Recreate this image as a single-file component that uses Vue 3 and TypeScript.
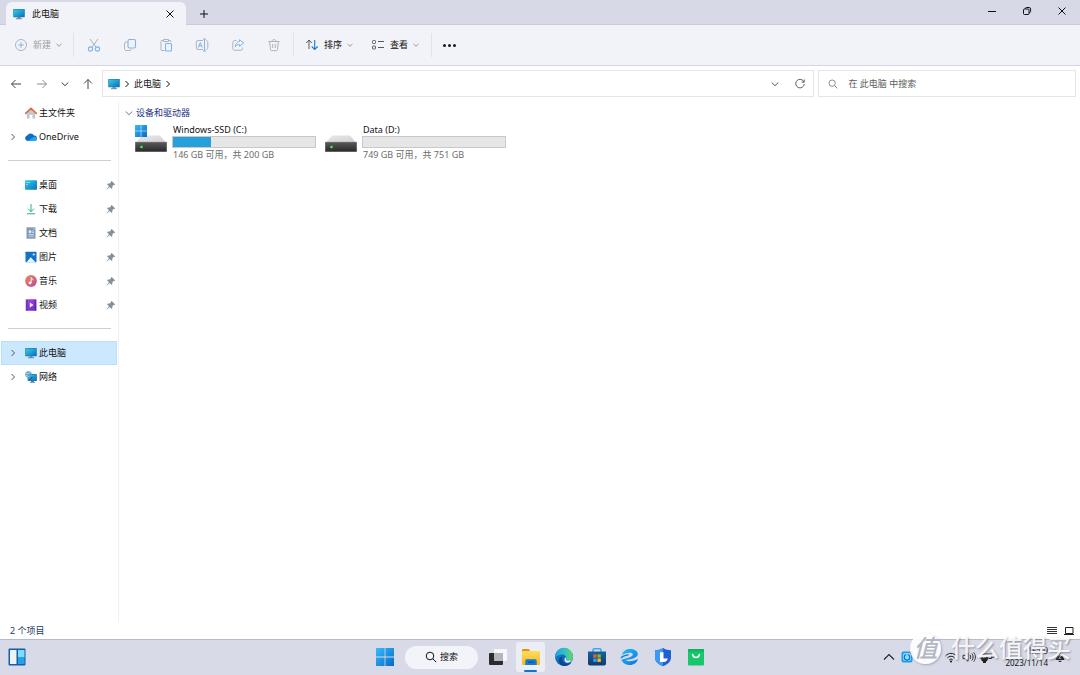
<script setup lang="ts">
interface NavItem {
  label: string
  icon: string
  expandable?: boolean
  pinned?: boolean
  active?: boolean
}
interface Drive {
  name: string
  free: number
  total: number
  system: boolean
  used: number
}

const editTools = [
  { icon: 'cut', label: '剪切' },
  { icon: 'copy', label: '复制' },
  { icon: 'paste', label: '粘贴' },
  { icon: 'rename', label: '重命名' },
  { icon: 'share', label: '共享' },
  { icon: 'trash', label: '删除' },
]

const navGroups: NavItem[][] = [
  [
    { label: '主文件夹', icon: 'home' },
    { label: 'OneDrive', icon: 'cloud', expandable: true },
  ],
  [
    { label: '桌面', icon: 'desktop', pinned: true },
    { label: '下载', icon: 'download', pinned: true },
    { label: '文档', icon: 'document', pinned: true },
    { label: '图片', icon: 'picture', pinned: true },
    { label: '音乐', icon: 'music', pinned: true },
    { label: '视频', icon: 'video', pinned: true },
  ],
  [
    { label: '此电脑', icon: 'pc', expandable: true, active: true },
    { label: '网络', icon: 'network', expandable: true },
  ],
]

const drives: Drive[] = [
  { name: 'Windows-SSD (C:)', free: 146, total: 200, system: true, used: 27 },
  { name: 'Data (D:)', free: 749, total: 751, system: false, used: 0 },
]

const apps = [
  { icon: 'taskview', label: '任务视图' },
  { icon: 'explorer', label: '文件资源管理器', active: true },
  { icon: 'edge', label: 'Edge' },
  { icon: 'store', label: 'Store' },
  { icon: 'browser', label: '浏览器' },
  { icon: 'shield', label: '电脑管家' },
  { icon: 'shop', label: '应用商店' },
]
</script>

<template>
  <div class="screen">
    <svg class="sprites" width="0" height="0" aria-hidden="true">
      <defs>
        <linearGradient id="gScreen" x1="0" y1="0" x2="1" y2="1">
          <stop offset="0" stop-color="#32cfe0" /><stop offset="1" stop-color="#0a70c4" />
        </linearGradient>
        <linearGradient id="gWin" x1="0" y1="0" x2="1" y2="1">
          <stop offset="0" stop-color="#35bdf5" /><stop offset="1" stop-color="#0868cc" />
        </linearGradient>
        <linearGradient id="gDisk" x1="0" y1="0" x2="0" y2="1">
          <stop offset="0" stop-color="#5a5a5c" /><stop offset="1" stop-color="#29292b" />
        </linearGradient>
        <linearGradient id="gLid" x1="0" y1="0" x2="1" y2="1">
          <stop offset="0" stop-color="#e9e9ea" /><stop offset="1" stop-color="#d0d0d3" />
        </linearGradient>
        <linearGradient id="gMusic" x1="0" y1="0" x2="1" y2="1">
          <stop offset="0" stop-color="#f08a56" /><stop offset="1" stop-color="#b8489c" />
        </linearGradient>
        <linearGradient id="gVideo" x1="0" y1="0" x2="1" y2="1">
          <stop offset="0" stop-color="#a24be6" /><stop offset="1" stop-color="#6c2bc0" />
        </linearGradient>
        <linearGradient id="gFolder" x1="0" y1="0" x2="0" y2="1">
          <stop offset="0" stop-color="#ffdc5e" /><stop offset="1" stop-color="#f7b71d" />
        </linearGradient>
        <linearGradient id="gEdge" x1="0" y1="0" x2="1" y2="0">
          <stop offset="0" stop-color="#1f9fe0" /><stop offset=".55" stop-color="#35bfc5" /><stop offset="1" stop-color="#66d85a" />
        </linearGradient>
        <linearGradient id="gEdgeLow" x1="0" y1="0" x2="1" y2="1">
          <stop offset="0" stop-color="#1787d8" /><stop offset="1" stop-color="#0c4e9c" />
        </linearGradient>
        <linearGradient id="gStore" x1="0" y1="0" x2="0" y2="1">
          <stop offset="0" stop-color="#17619f" /><stop offset="1" stop-color="#123a6c" />
        </linearGradient>
        <linearGradient id="gBrowser" x1="0" y1="0" x2="1" y2="1">
          <stop offset="0" stop-color="#1ec4f4" /><stop offset="1" stop-color="#0e70e4" />
        </linearGradient>
      </defs>

      <symbol id="pc" viewBox="0 0 12 12">
        <path d="M4.500 9h3v1.600h-3z" fill="#7d97aa" /><path d="M3 10.300h6v.9H3z" fill="#5b7b92" />
        <rect x=".3" y="1" width="11.400" height="8.300" rx=".5" fill="#1c6fa0" />
        <rect x=".8" y="1.500" width="10.400" height="7.200" fill="url(#gScreen)" />
      </symbol>
      <symbol id="network" viewBox="0 0 12 12">
        <path d="M6 9.800h3V11h1v.8H5V11h1z" fill="#5b7b92" />
        <rect x="2.600" y="3" width="9.200" height="7" rx=".4" fill="#1c6fa0" />
        <rect x="3.100" y="3.500" width="8.200" height="6" fill="url(#gScreen)" />
        <circle cx="3.500" cy="3.500" r="3.200" fill="#4f9fcb" />
        <path d="M1 2.500c1.500-.8 2 .4 3 0S5 1 5.500 1.200M1 5c1-.6 2-.2 2.500 1" stroke="#d4eef8" stroke-width=".9" fill="none" />
        <path d="m4.500 9 3-3.200" stroke="#135f9a" stroke-width="1.200" />
      </symbol>
      <symbol id="home" viewBox="0 0 12 12">
        <path d="M1.800 5.500 6 1.800l4.200 3.700v6H7.400V7.800H4.600v3.700H1.800z" fill="#c2c7cd" />
        <path d="M.7 6.400 6 1.300l5.300 5.100" fill="none" stroke="#e0653a" stroke-width="1.500" stroke-linecap="round" stroke-linejoin="round" />
      </symbol>
      <symbol id="cloud" viewBox="0 0 12 12">
        <path d="M2.800 10A2.800 2.800 0 0 1 2.200 4.500 3.900 3.900 0 0 1 9 4.600a2.700 2.700 0 0 1 .5 5.400z" fill="#0f6cc9" />
        <path d="M2.800 10 8.600 6a2.600 2.600 0 0 1 3.300 1.900A2.100 2.100 0 0 1 9.700 10z" fill="#28a4ee" />
      </symbol>
      <symbol id="desktop" viewBox="0 0 12 12">
        <rect x="0" y="1.300" width="12" height="9.400" rx=".8" fill="url(#gScreen)" />
        <path d="M1.500 3h1v1h-1zM1.500 5h1v1h-1zM3.500 3h1v1h-1z" fill="#c7f4f7" />
      </symbol>
      <symbol id="download" viewBox="0 0 12 12">
        <path d="M6 1v7.500M3 5.700l3 3 3-3M2 10.800h8" stroke="#2fae8c" fill="none" stroke-width="1" />
      </symbol>
      <symbol id="document" viewBox="0 0 12 12">
        <path d="M1.500.3h9v11.400h-9z" fill="#8299b8" /><path d="M8.500.3v2h2z" fill="#c8d6e5" />
        <path d="M4 3.700h2v2H4zM7 4h2M7 5.500h2M3.500 7.500H9M3.500 9.200H9" fill="#eef4fa" stroke="#dfe9f3" stroke-width=".7" />
      </symbol>
      <symbol id="picture" viewBox="0 0 12 12">
        <rect x=".5" y=".7" width="11" height="10.600" rx=".6" fill="#1272c8" />
        <path d="m1.500 11.300 4.200-5 4.800 5z" fill="#e6f4ff" /><circle cx="8.700" cy="3.500" r="1.100" fill="#d8eeff" />
      </symbol>
      <symbol id="music" viewBox="0 0 12 12">
        <circle cx="6" cy="6" r="5.900" fill="url(#gMusic)" />
        <path d="M6.200 7.800V2.700c.3 1.100 2 1.200 2 2.500" stroke="#fff" stroke-width=".9" fill="none" /><circle cx="5" cy="7.900" r="1.400" fill="#fff" />
      </symbol>
      <symbol id="video" viewBox="0 0 12 12">
        <rect x=".7" y=".2" width="10.800" height="11.600" rx=".6" fill="url(#gVideo)" />
        <path d="M2 1.200v10M10.200 1.200v10" stroke="#3f1680" stroke-width="1.100" stroke-dasharray="1.200 1" /><path d="m4.800 3.500 3.800 2.500-3.800 2.500z" fill="#f3eaff" />
      </symbol>
      <symbol id="pin" viewBox="0 0 10 10">
        <path d="m5.500.8 3.700 3.700-.8.4-.6-.1-1.500 1.500.1 1.800-.8.800L3.700 7 1 9.500.6 9.200 3 6.300 1 4.300l.9-.8 1.800.1 1.500-1.500-.1-.7z" fill="#84909b" />
      </symbol>

      <symbol id="chevron-right" viewBox="0 0 8 8"><path d="m2.500 1 3 3-3 3" fill="none" stroke="currentColor" stroke-width="1" /></symbol>
      <symbol id="chevron-down" viewBox="0 0 8 8"><path d="m.7 2.500 3.300 3.200 3.300-3.200" fill="none" stroke="currentColor" stroke-width="1" /></symbol>

      <symbol id="cut" viewBox="0 0 14 14" fill="none">
        <path d="M3 1 9.200 9.500M11 1 4.800 9.500" stroke="#a5a8af" stroke-width=".9" />
        <circle cx="3.500" cy="11" r="2.100" stroke="#7fb5e6" stroke-width="1.100" /><circle cx="10.500" cy="11" r="2.100" stroke="#7fb5e6" stroke-width="1.100" />
      </symbol>
      <symbol id="copy" viewBox="0 0 14 14" fill="none">
        <path d="M4.500 4H3a1.500 1.500 0 0 0-1.500 1.500v5.300c0 1 .7 1.700 1.700 1.700h3.600c1 0 1.500-.6 1.700-1.500" stroke="#a8abb2" stroke-width=".9" />
        <rect x="5" y="1.500" width="7.500" height="8.500" rx="1.500" stroke="#7fb5e6" stroke-width="1.100" />
      </symbol>
      <symbol id="paste" viewBox="0 0 14 14" fill="none">
        <path d="M5.500 12.500H3a1 1 0 0 1-1-1v-8a1 1 0 0 1 1-1h1.500m5 0H11a1 1 0 0 1 1 1v.5M4.500 1.500h5v2h-5z" stroke="#a8abb2" stroke-width=".9" />
        <rect x="6.500" y="5.500" width="6" height="7.500" rx="1" stroke="#7fb5e6" stroke-width="1.100" />
      </symbol>
      <symbol id="rename" viewBox="0 0 14 14" fill="none">
        <path d="M8 2.500H3A1.700 1.700 0 0 0 1.300 4.200v5.600A1.700 1.700 0 0 0 3 11.500h5m3-9c1 0 1.800.7 1.800 1.700v5.600c0 1-.8 1.700-1.800 1.700" stroke="#a8abb2" stroke-width=".9" />
        <path d="m3.300 9.500 2-5 2 5M4 7.800h2.600M9.500 1v12M8 1h3M8 13h3" stroke="#7fb5e6" />
      </symbol>
      <symbol id="share" viewBox="0 0 14 14" fill="none">
        <path d="M5.500 2.500H3.800A2 2 0 0 0 1.800 4.500v5.800a2 2 0 0 0 2 2h5.800a2 2 0 0 0 2-2V9.500" stroke="#a8abb2" stroke-width=".9" />
        <path d="M8.500 1.700 12.700 5 8.500 8.300V6.500c-2 0-3.200.7-4.200 2.300.2-3 1.700-5 4.200-5.300z" stroke="#7fb5e6" stroke-linejoin="round" />
      </symbol>
      <symbol id="trash" viewBox="0 0 14 14" fill="none">
        <path d="M1.500 3.500h11M5 3.500c0-2.600 4-2.600 4 0M2.600 3.500l.9 8c.1.800.6 1.200 1.300 1.200h4.400c.7 0 1.200-.4 1.300-1.200l.9-8M5.700 6v4M8.300 6v4" stroke="#a8abb2" stroke-width=".9" />
      </symbol>
      <symbol id="plus-circle" viewBox="0 0 14 14" fill="none">
        <circle cx="7" cy="7" r="5.500" stroke="#a8abb2" stroke-width=".9" /><path d="M7 4.200v5.600M4.200 7h5.600" stroke="#7fb5e6" />
      </symbol>
      <symbol id="sort" viewBox="0 0 14 14" fill="none">
        <path d="M4 11V2M1.200 5 4 2l2.800 3" stroke="#4a4c50" stroke-width=".9" /><path d="M9.700 2v9.500M6.700 8.500l3 3 3-3" stroke="#1a7bd0" stroke-width="1.100" />
      </symbol>
      <symbol id="view" viewBox="0 0 14 14" fill="none" stroke="#55575b">
        <rect x="1.500" y="2.500" width="3" height="3" rx=".8" /><rect x="1.500" y="8" width="3" height="3" rx=".8" /><path d="M7 3.500h6M7 9.500h6" />
      </symbol>
      <symbol id="arrow-left" viewBox="0 0 12 12" fill="none"><path d="M11 6H1.500M5.500 2l-4 4 4 4" stroke="currentColor" /></symbol>
      <symbol id="arrow-right" viewBox="0 0 12 12" fill="none"><path d="M1 6h9.500M6.500 2l4 4-4 4" stroke="currentColor" /></symbol>
      <symbol id="arrow-up" viewBox="0 0 12 12" fill="none"><path d="M6 11V1.500M2 5.500l4-4 4 4" stroke="currentColor" /></symbol>
      <symbol id="refresh" viewBox="0 0 12 12" fill="none"><path d="M10 4a4.300 4.300 0 1 0 .3 2M10.200 1.500v2.700H7.500" stroke="currentColor" stroke-width=".9" /></symbol>
      <symbol id="search" viewBox="0 0 12 12" fill="none"><circle cx="5" cy="5" r="3.800" stroke="currentColor" /><path d="m7.800 7.800 3.400 3.400" stroke="currentColor" /></symbol>
      <symbol id="close" viewBox="0 0 10 10"><path d="m1.500 1.500 7 7m0-7-7 7" stroke="currentColor" fill="none" /></symbol>
      <symbol id="plus" viewBox="0 0 10 10"><path d="M5 1v8M1 5h8" stroke="currentColor" fill="none" /></symbol>
      <symbol id="minimize" viewBox="0 0 10 10"><path d="M1 5.500h8" stroke="currentColor" fill="none" /></symbol>
      <symbol id="restore" viewBox="0 0 10 10" fill="none" stroke="currentColor"><rect x="1.500" y="3" width="5.500" height="5.500" rx="1" /><path d="M3.200 2.900c0-1 .5-1.400 1.300-1.400h2.500a1.600 1.600 0 0 1 1.600 1.600v2.200c0 .9-.5 1.500-1.500 1.500" /></symbol>

      <symbol id="drive" viewBox="0 0 32 17">
        <path d="M7 .5h18L31.500 8H.5z" fill="url(#gLid)" /><rect x=".2" y="7" width="31.600" height="9.700" rx=".5" fill="url(#gDisk)" />
        <path d="M.2 7.300h31.600" stroke="#77777a" stroke-width=".7" /><circle cx="6.500" cy="12" r="1.300" fill="#3df04a" />
      </symbol>
      <symbol id="windows" viewBox="0 0 18 18"><path d="M0 0h8.600v8.600H0zM9.400 0H18v8.600H9.400zM0 9.400h8.600V18H0zM9.400 9.400H18V18H9.400z" fill="url(#gWin)" /></symbol>
      <symbol id="widgets" viewBox="0 0 18 18">
        <rect x=".5" y=".5" width="17" height="17" rx="1" fill="#0f5fae" /><rect x="2" y="2" width="6.500" height="14" rx=".5" fill="#f1f2f6" />
        <rect x="10" y="2" width="6.500" height="7" fill="#7fdcfa" /><rect x="10" y="9" width="6.500" height="7" fill="#2a9fe6" />
      </symbol>

      <symbol id="taskview" viewBox="0 0 20 20">
        <rect x="1" y="6" width="14" height="12" rx="1" fill="#2c2c2e" /><rect x="6" y="2" width="13" height="12" rx="1" fill="#f7f7f9" />
        <path d="M6 6h9v8H6z" fill="#b5b6bb" />
      </symbol>
      <symbol id="explorer" viewBox="0 0 20 20">
        <path d="M1 3.200c0-.7.500-1.200 1.200-1.200h5.300L9.500 4v4H1z" fill="#dd9415" /><rect x="1" y="4" width="18" height="14" rx="1" fill="url(#gFolder)" />
        <path d="M4.300 18v-4.200c0-.9.700-1.500 1.500-1.500h8.400c.9 0 1.500.6 1.500 1.500V18z" fill="#1679d2" /><path d="M7 15.200h6" stroke="#0a4992" />
      </symbol>
      <symbol id="edge" viewBox="0 0 20 20">
        <circle cx="10" cy="10" r="9" fill="url(#gEdgeLow)" />
        <path d="M1 10A9 9 0 0 1 19 9.500c0 3-2.200 4.300-4.700 4.300-2 0-3-.8-2.500-1.500C13 9.500 11 7.400 8.400 7.400 4.500 7.400 1.500 10 1 10z" fill="url(#gEdge)" />
        <path d="M8.300 9.500c-1.500 4.300 1.400 7.800 5.400 7.600 1.600 0 2.800-.7 3.800-1.500-1.500 2-3.800 3.400-6.500 3.400C6.800 19 4 15.500 5 12c.5-1.500 1.800-2.300 3.300-2.500z" fill="#0b478c" />
        <path d="M12 12.300c-.5.700.5 1.500 2.300 1.500 1.500 0 2.800-.4 3.700-1.200-.5 2-2.400 3.200-4.400 3.200-2.700 0-4.200-2.600-2.200-5.500.6.500.8 1.300.6 2z" fill="#e2edf7" />
      </symbol>
      <symbol id="store" viewBox="0 0 20 20">
        <path d="M6 5V3c0-.8.500-1.300 1.300-1.300h5.400c.8 0 1.300.5 1.300 1.300v2" fill="none" stroke="#38a9ea" stroke-width="1.600" />
        <path d="M1 4.500h18v12c0 1.300-.8 2-2 2H3c-1.200 0-2-.7-2-2z" fill="url(#gStore)" />
        <path d="M6.200 7.300h3.400v3.400H6.200z" fill="#f25a2a" /><path d="M10.400 7.300h3.400v3.400h-3.400z" fill="#7dbb22" /><path d="M6.200 11.500h3.400v3.400H6.200z" fill="#22a0ec" /><path d="M10.400 11.500h3.400v3.400h-3.400z" fill="#fdb924" />
      </symbol>
      <symbol id="browser" viewBox="0 0 20 20">
        <path d="M2 8C3 3.800 6.500 2 10 2c4.200 0 7.800 2 7.800 5 0 3.300-5.500 5.400-12 6 2 2 6.500 1.500 12.200-1-1 3.500-4 6-8 6-4.200 0-8-2.200-8.500-5.500C5 12 12.800 10 12.800 7.500 12.800 5 6.500 5.500 2 8z" fill="url(#gBrowser)" />
        <path d="M1 11c1-1.500 4-2.600 7.500-3.200" stroke="#167de8" stroke-width="1.500" fill="none" />
      </symbol>
      <symbol id="shield" viewBox="0 0 20 20">
        <path d="M10 1c2.500 1.500 5 2.200 8 2.200v7.300c0 4.300-3.500 7-8 8.700-4.500-1.700-8-4.400-8-8.700V3.200C5 3.200 7.500 2.500 10 1z" fill="#1f5fd4" />
        <path d="M10 1C7.500 2.500 5 3.200 2 3.200v7.300c0 4.300 3.500 7 8 8.700z" fill="#3b98f3" /><path d="M7 5.200h3.500v6.300h4.300c-.4 1.700-1.600 3-3.200 3.500H7z" fill="#fff" />
      </symbol>
      <symbol id="shop" viewBox="0 0 20 20">
        <rect x="2" y="2" width="16" height="16.500" rx="1" fill="#18c66e" /><path d="M2 2h16v2.500H2z" fill="#0cb562" />
        <path d="M6.500 7.500c1 4 6 4 7 0" fill="none" stroke="#fff" stroke-width="1.500" stroke-linecap="round" />
      </symbol>

      <symbol id="tray-up" viewBox="0 0 14 14"><path d="m2 9.500 5-5 5 5" fill="none" stroke="#222" stroke-width="1.100" /></symbol>
      <symbol id="tray-app" viewBox="0 0 14 14"><rect x="1.500" y="1.500" width="11" height="11" rx="2" fill="#179df2" /><rect x="3" y="3" width="8" height="8" rx="2" fill="#8fdcfa" /><circle cx="7" cy="7.300" r="2.800" fill="none" stroke="#0f68c8" stroke-width="1.100" /><path d="M7 3.500V6" stroke="#8fdcfa" stroke-width="1.500" /><circle cx="11.500" cy="2.500" r="1.500" fill="#ee4c3c" /></symbol>
      <symbol id="tray-ime" viewBox="0 0 14 14"><path d="M1.500 3h2M5 3h8M1.500 6.500h2M5 6.500h6M1.500 10h2" stroke="#3a3a3f" fill="none" /></symbol>
      <symbol id="wifi" viewBox="0 0 14 14"><path d="M1.500 6c3-3.500 8-3.500 11 0M3.300 8c2-2.300 5.400-2.300 7.400 0M5.200 10c1-1.200 2.600-1.200 3.600 0" stroke="#222" fill="none" /><circle cx="7" cy="11.500" r="1.100" fill="#222" /></symbol>
      <symbol id="volume" viewBox="0 0 14 14"><path d="M1 5.300h2.200L6 2.800v8.400L3.200 8.700H1zM8 5c1 1.200 1 2.800 0 4M9.800 3.500c1.800 2 1.800 5 0 7M11.600 2.300c2.400 2.700 2.400 6.700 0 9.400" stroke="#222" stroke-width=".9" fill="none" /></symbol>
      <symbol id="battery" viewBox="0 0 14 14"><path d="M3 5.500V4h8.500v4.500H9M11.500 5.500H13v2h-1.500" stroke="#222" fill="none" /><path d="M1.500 6h1.500v1.500h3V6h1.500v1.500h1V9h-.7c0 1.500-.8 2.300-1.800 2.500V13H3v-1.500C2 11.300 1.200 10.500 1.200 9H.5V7.500h1z" fill="#222" /></symbol>
      <symbol id="bell" viewBox="0 0 14 14"><path d="M1.500 10.500 3 8V6c0-5 8-5 8 0v2l1.500 2.500zM5 11.300h4c-.5 2-3.500 2-4 0z" fill="#222" /><path d="M5.500 5.500h3l-3 3h3" stroke="#d8dae8" fill="none" stroke-width=".8" /></symbol>
      <symbol id="list-mode" viewBox="0 0 10 10"><path d="M0 1.500h10M0 3.500h10M0 5.500h10M0 7.500h10" stroke="#333" stroke-width="1" /></symbol>
      <symbol id="tile-mode" viewBox="0 0 10 10"><path d="M1.500 1.500h7.500v6H1.500zM0 8.500h10" stroke="#222" fill="none" /></symbol>
    </svg>

    <header class="titlebar">
      <div class="tab">
        <svg class="i12"><use href="#pc" /></svg>
        <span class="tab-title">此电脑</span>
        <button class="tab-close" aria-label="关闭标签页"><svg class="i10"><use href="#close" /></svg></button>
      </div>
      <button class="tab-new" aria-label="新建标签页"><svg class="i10"><use href="#plus" /></svg></button>
      <div class="window-controls">
        <button aria-label="最小化"><svg class="i10"><use href="#minimize" /></svg></button>
        <button aria-label="还原"><svg class="i10"><use href="#restore" /></svg></button>
        <button aria-label="关闭"><svg class="i10"><use href="#close" /></svg></button>
      </div>
    </header>

    <div class="toolbar">
      <button class="menu new muted"><svg class="i14"><use href="#plus-circle" /></svg><span>新建</span><svg class="i6"><use href="#chevron-down" /></svg></button>
      <i class="sep"></i>
      <button v-for="t in editTools" :key="t.icon" class="tool" :aria-label="t.label"><svg class="i14"><use :href="'#' + t.icon" /></svg></button>
      <i class="sep"></i>
      <button class="menu sort"><svg class="i14"><use href="#sort" /></svg><span>排序</span><svg class="i6"><use href="#chevron-down" /></svg></button>
      <button class="menu view"><svg class="i14"><use href="#view" /></svg><span>查看</span><svg class="i6"><use href="#chevron-down" /></svg></button>
      <i class="sep"></i>
      <button class="more" aria-label="更多"><b></b><b></b><b></b></button>
    </div>

    <div class="address-row">
      <button class="nav" aria-label="后退"><svg class="i12"><use href="#arrow-left" /></svg></button>
      <button class="nav dim" aria-label="前进"><svg class="i12"><use href="#arrow-right" /></svg></button>
      <button class="nav narrow" aria-label="最近位置"><svg class="i8"><use href="#chevron-down" /></svg></button>
      <button class="nav" aria-label="向上"><svg class="i12"><use href="#arrow-up" /></svg></button>
      <nav class="address">
        <svg class="i12"><use href="#pc" /></svg>
        <svg class="i8"><use href="#chevron-right" /></svg>
        <a href="#">此电脑</a>
        <svg class="i8"><use href="#chevron-right" /></svg>
        <button class="history" aria-label="历史"><svg class="i8"><use href="#chevron-down" /></svg></button>
        <button class="history" aria-label="刷新"><svg class="i12"><use href="#refresh" /></svg></button>
      </nav>
      <label class="search">
        <svg class="i10"><use href="#search" /></svg>
        <input type="text" placeholder="在 此电脑 中搜索" aria-label="在 此电脑 中搜索" />
      </label>
    </div>

    <div class="body">
      <aside class="sidebar">
        <ul v-for="(group, g) in navGroups" :key="g">
          <li v-for="item in group" :key="item.label">
            <a href="#" class="nav-item" :class="{ active: item.active }">
              <span class="expander"><svg v-if="item.expandable" class="i8"><use href="#chevron-right" /></svg></span>
              <svg class="i12"><use :href="'#' + item.icon" /></svg>
              <span class="nav-label">{{ item.label }}</span>
              <svg v-if="item.pinned" class="i10"><use href="#pin" /></svg>
            </a>
          </li>
        </ul>
      </aside>
      <main class="content">
        <h2><svg class="i8"><use href="#chevron-down" /></svg>设备和驱动器</h2>
        <div class="drives">
          <article v-for="d in drives" :key="d.name" class="drive">
            <div class="drive-icon">
              <svg v-if="d.system" class="flag"><use href="#windows" /></svg>
              <svg class="disk"><use href="#drive" /></svg>
            </div>
            <div class="drive-info">
              <div class="drive-name">{{ d.name }}</div>
              <div class="meter"><div :style="{ width: d.used + '%' }"></div></div>
              <div class="drive-free">{{ d.free }} GB 可用，共 {{ d.total }} GB</div>
            </div>
          </article>
        </div>
      </main>
    </div>

    <footer class="status">
      <span>2 个项目</span>
      <button aria-label="详细信息"><svg class="i10"><use href="#list-mode" /></svg></button>
      <button aria-label="大图标"><svg class="i10"><use href="#tile-mode" /></svg></button>
    </footer>

    <div class="taskbar">
      <button class="widgets" aria-label="小组件"><svg class="i18"><use href="#widgets" /></svg></button>
      <div class="apps">
        <button class="app" aria-label="开始"><svg class="i18"><use href="#windows" /></svg></button>
        <button class="task-search"><svg class="i12"><use href="#search" /></svg>搜索</button>
        <button v-for="a in apps" :key="a.icon" class="app" :class="{ open: a.active }" :aria-label="a.label"><svg class="i20"><use :href="'#' + a.icon" /></svg></button>
      </div>
      <div class="tray">
        <svg class="i14"><use href="#tray-up" /></svg>
        <svg class="i14"><use href="#tray-app" /></svg>
        <svg class="i14 ime"><use href="#tray-ime" /></svg>
        <svg class="i14"><use href="#wifi" /></svg>
        <svg class="i14"><use href="#volume" /></svg>
        <svg class="i14"><use href="#battery" /></svg>
        <div class="clock"><span>15:09</span><span>2023/11/14</span></div>
        <svg class="i12"><use href="#bell" /></svg>
      </div>
      <div class="watermark"><span class="badge">值</span><span>什么值得买</span></div>
    </div>
  </div>
</template>

<style>
html, body { margin: 0; background: #fff; }
</style>

<style scoped>
.screen {
  display: flex;
  flex-direction: column;
  min-height: 100vh;
  font-family: "Noto Sans", "Noto Sans CJK SC", sans-serif;
  font-size: 9px;
  line-height: 12px;
  color: #111;
  background: #fff;
}
.sprites { position: absolute; }
svg { flex: none; display: block; }
button { font: inherit; color: inherit; background: none; border: 0; padding: 0; display: flex; align-items: center; justify-content: center; }
a { color: inherit; text-decoration: none; }
ul { list-style: none; margin: 0; padding: 0; }
.i6 { width: 6px; height: 6px; }
.i8 { width: 8px; height: 8px; }
.i10 { width: 10px; height: 10px; }
.i12 { width: 12px; height: 12px; }
.i14 { width: 14px; height: 14px; }
.i18 { width: 18px; height: 18px; }
.i20 { width: 20px; height: 20px; }

.titlebar { display: flex; height: 25px; background: #d8d9e7; box-shadow: inset 0 -1px #c9cadc; padding-left: 6px; }
.tab { display: flex; align-items: center; width: 180px; box-sizing: border-box; margin-top: 2px; padding: 0 11px 0 7px; border-radius: 6px 6px 0 0; background: #f2f3f8; }
.tab-title { flex: 1; margin-left: 7px; }
.tab-new { width: 36px; padding-top: 2px; }
.window-controls { display: flex; margin-left: auto; height: 21px; padding-right: 1px; }
.window-controls button { width: 35px; }

.toolbar { display: flex; align-items: center; height: 40px; padding-left: 14px; background: #f2f3f8; border-bottom: 1px solid #d4d5e1; }
.menu { justify-content: flex-start; height: 24px; }
.menu span { margin: 0 5px; }
.menu.new { width: 58px; }
.menu.sort { width: 66px; padding-left: 9px; }
.menu.view { width: 68px; padding-left: 9px; }
.menu .i6 { color: #77797f; }
.muted { color: #9d9fa6; }
.sep { width: 1px; height: 24px; margin: 0 2px 0 1px; background: #e2e3e9; }
.tool { width: 36px; height: 24px; }
.more { width: 30px; height: 24px; gap: 2px; }
.more b { width: 3px; height: 3px; border-radius: 50%; background: #1b1b1b; }

.address-row { display: flex; align-items: center; height: 27px; padding: 4px 4px 4px 3px; color: #444; }
.nav { width: 26px; height: 27px; }
.nav.narrow { width: 20px; }
.nav.dim { color: #8d8d8d; }
.address, .search { display: flex; align-items: center; height: 27px; box-sizing: border-box; border: 1px solid #e5e5e8; }
.address { flex: 1; margin: 0 4px 0 1px; padding: 0 2px 0 5px; gap: 3px; color: #111; }
.history { width: 22px; height: 25px; color: #555; }
.history:nth-last-child(2) { margin-left: auto; }
.search { width: 24%; padding-left: 9px; color: #777; }
.search input { flex: 1; min-width: 0; margin-left: 10px; border: 0; outline: 0; padding: 0; background: none; font: inherit; color: #555; }
.search input::placeholder { color: #5d5d5d; opacity: 1; }

.body { display: flex; flex: 1; }
.sidebar { width: 119px; box-sizing: border-box; flex: none; border-right: 1px solid #f1f1f1; }
.sidebar ul + ul { padding-top: 12px; }
.sidebar ul + ul::before { content: ""; display: block; height: 1px; margin: -1px 7px 12px 8px; background: #cfcfcf; }
.nav-item { display: flex; align-items: center; height: 24px; box-sizing: border-box; margin: 0 1px; padding-right: 0; border: 1px solid transparent; }
.nav-item.active { background: #cce8ff; border-color: #b9dffb; }
.expander { width: 23px; padding-left: 7px; box-sizing: border-box; color: #555; }
.nav-label { flex: 1; margin-left: 2px; }
.content { flex: 1; padding: 6px 0 0 6px; }
h2 { display: flex; align-items: center; gap: 3px; margin: 0; font: inherit; color: #1e3287; }
h2 svg { color: #777; }
.drives { display: flex; flex-wrap: wrap; gap: 9px; padding-left: 10px; }
.drive { display: flex; width: 181px; gap: 5px; padding-top: 5px; }
.drive-icon { position: relative; width: 32px; }
.disk { width: 32px; height: 17px; margin-top: 11px; }
.flag { position: absolute; left: 0; top: 1px; width: 12px; height: 12px; }
.drive-info { flex: 1; white-space: nowrap; }
.meter { height: 12px; box-sizing: border-box; margin-bottom: 1px; border: 1px solid #c8c8c8; background: #e6e6e6; }
.meter div { height: 100%; background: #26a0da; }
.drive-name, .drive-free { padding-left: 1px; }
.drive-free { color: #6d6d6d; }

.status { display: flex; align-items: center; height: 17px; padding: 0 6px 0 10px; color: #24395c; }
.status span { flex: 1; }
.status button { margin-left: 7px; }

.taskbar { position: relative; display: grid; grid-template-columns: 1fr auto 1fr; align-items: center; height: 34px; padding-bottom: 1px; border-top: 1px solid #b9bac8; background: #d8dae8; }
.widgets { margin-left: 8px; justify-self: start; }
.apps { display: flex; align-items: center; }
.app { width: 33px; height: 30px; position: relative; }
.task-search { width: 73px; height: 23px; margin: 0 3px 0 4px; border-radius: 12px; background: #f3f4fa; gap: 3px; }
.app.open::before { content: ""; position: absolute; inset: 0 2px; border-radius: 3px; background: #eceef6; }
.app.open svg { position: relative; }
.app.open::after { content: ""; position: absolute; bottom: 0; left: 10px; right: 10px; height: 2px; border-radius: 1px; background: #1273cf; }
.tray { display: flex; align-items: center; justify-self: end; gap: 4px; padding-right: 14px; }
.tray .ime { margin: 0 4px; }
.clock { display: flex; flex-direction: column; align-items: flex-end; margin-left: 7px; margin-right: 2px; font-size: 8px; }
.watermark { position: absolute; right: 9px; top: -8px; display: flex; align-items: center; gap: 10px; height: 32px; font-size: 24px; font-weight: 500; line-height: 32px; color: rgba(255, 255, 255, .9); text-shadow: 1px 1px 2px rgba(90, 90, 110, .6); white-space: nowrap; }
.badge { width: 31px; height: 31px; border-radius: 50%; background: rgba(255, 255, 255, .9); color: #b4b6c4; line-height: 30px; text-align: center; text-shadow: none; font-style: italic; box-shadow: 1px 1px 2px rgba(90, 90, 110, .4); }
</style>
